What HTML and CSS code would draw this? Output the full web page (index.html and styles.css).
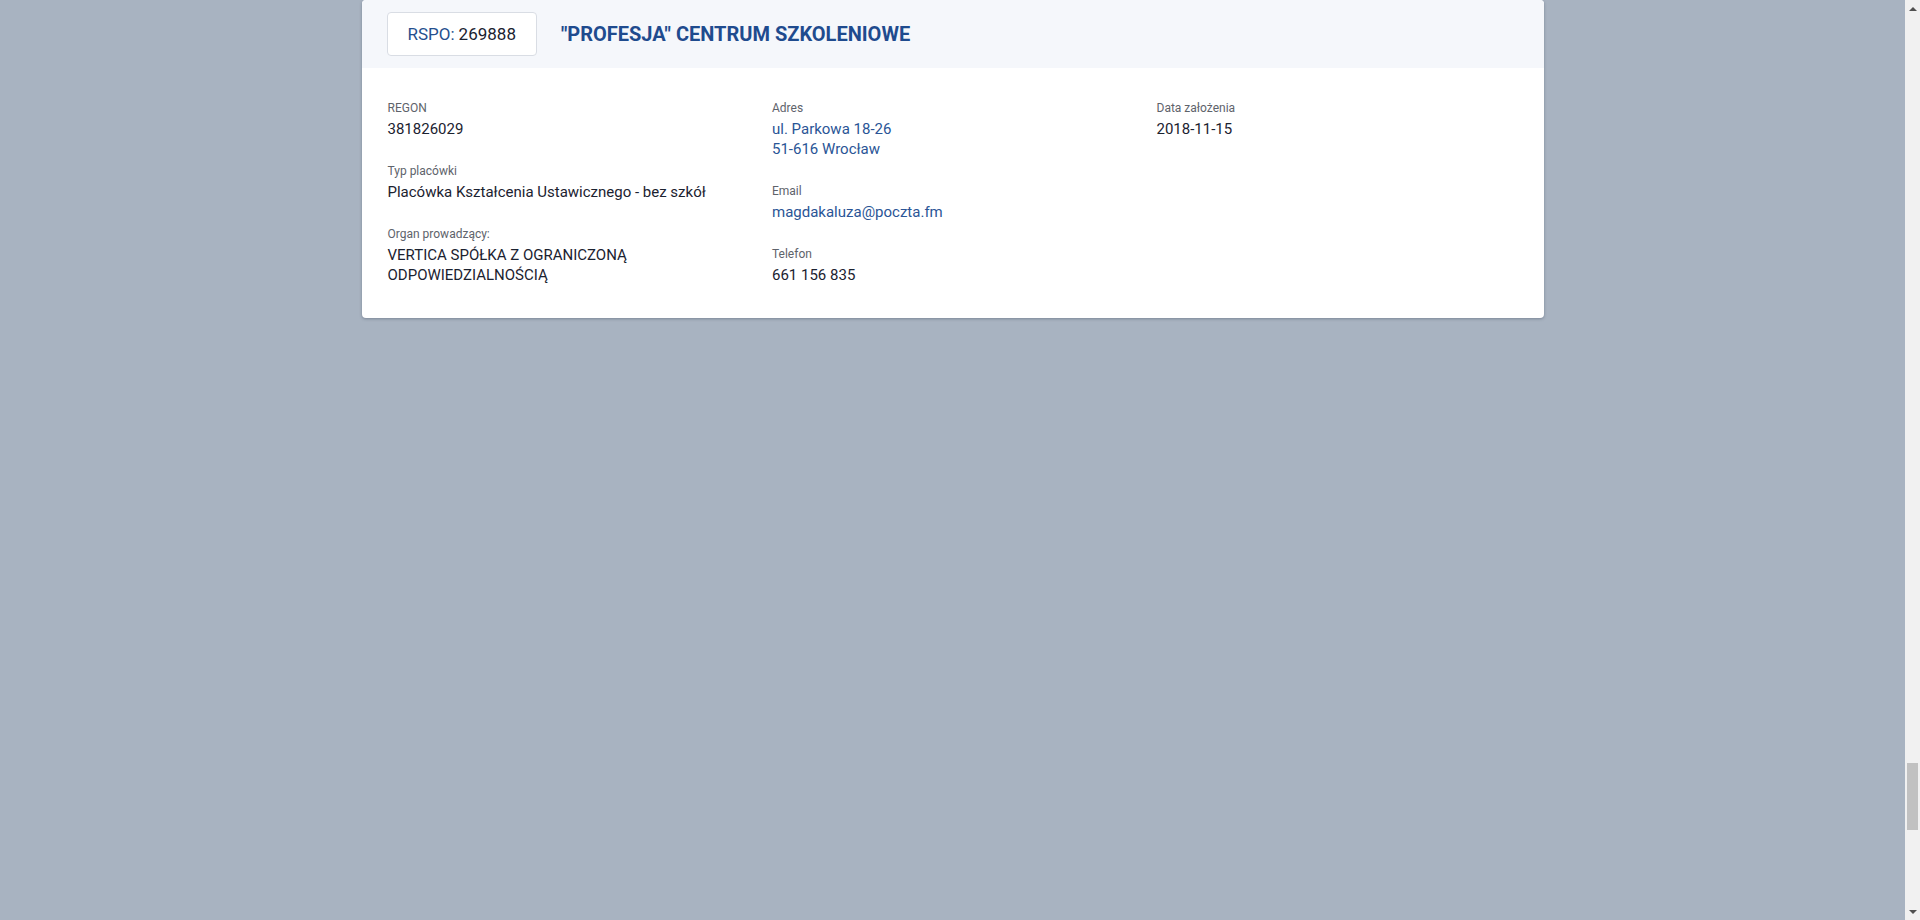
FILE: index.html
```html
<!DOCTYPE html>
<html lang="pl">
<head>
<meta charset="utf-8">
<title>Placówka</title>
<link rel="stylesheet" href="styles.css">
</head>
<body>
<div class="viewport">
  <main class="page">
    <article class="card">
      <header class="card-head">
        <div class="rspo"><span class="rspo-label">RSPO:</span> 269888</div>
        <h1 class="title">"PROFESJA" CENTRUM SZKOLENIOWE</h1>
      </header>
      <section class="card-body">
        <div class="col">
          <div class="field">
            <div class="label">REGON</div>
            <div class="value">381826029</div>
          </div>
          <div class="field">
            <div class="label">Typ placówki</div>
            <div class="value">Placówka Kształcenia Ustawicznego - bez szkół</div>
          </div>
          <div class="field">
            <div class="label">Organ prowadzący:</div>
            <div class="value">VERTICA SPÓŁKA Z OGRANICZONĄ ODPOWIEDZIALNOŚCIĄ</div>
          </div>
        </div>
        <div class="col">
          <div class="field">
            <div class="label">Adres</div>
            <div class="value link">ul. Parkowa 18-26<br>51-616 Wrocław</div>
          </div>
          <div class="field">
            <div class="label">Email</div>
            <div class="value link">magdakaluza@poczta.fm</div>
          </div>
          <div class="field">
            <div class="label">Telefon</div>
            <div class="value">661 156 835</div>
          </div>
        </div>
        <div class="col">
          <div class="field">
            <div class="label">Data założenia</div>
            <div class="value">2018-11-15</div>
          </div>
        </div>
      </section>
    </article>
  </main>
  <div class="scrollbar" aria-hidden="true">
    <div class="sb-btn"><span class="arrow-up"></span></div>
    <div class="sb-track"><div class="sb-thumb"></div></div>
    <div class="sb-btn"><span class="arrow-down"></span></div>
  </div>
</div>
</body>
</html>
```

FILE: styles.css
```css
* { box-sizing: border-box; }

html, body {
  margin: 0;
  padding: 0;
  height: 920px;
  overflow: hidden;
}

body {
  background: #a8b3c1;
  font-family: Roboto, "Liberation Sans", Arial, sans-serif;
  color: #1b2230;
}

.viewport {
  display: flex;
  height: 920px;
}

.page {
  flex: 1;
  display: flex;
  justify-content: center;
  align-items: flex-start;
}

.card {
  width: 1182px;
  background: #ffffff;
  border-radius: 4px;
  box-shadow: 0 1px 3px rgba(40, 50, 70, 0.35);
  overflow: hidden;
}

.card-head {
  display: flex;
  align-items: center;
  gap: 24px;
  padding: 12px 25px 12px;
  background: #f5f7fb;
}

.rspo {
  height: 44px;
  display: flex;
  align-items: center;
  gap: 4px;
  padding: 0 20px;
  border: 1px solid #d9dde4;
  border-radius: 4px;
  background: #ffffff;
  font-size: 17px;
  color: #1b2230;
}

.rspo-label { color: #254f8e; }

.title {
  margin: 0;
  font-size: 20px;
  font-weight: 700;
  color: #1f4b8e;
}

.card-body {
  display: grid;
  grid-template-columns: repeat(3, 1fr);
  column-gap: 23.5px;
  padding: 32px 26px 33px;
}

.col {
  display: flex;
  flex-direction: column;
  gap: 24px;
}

.label {
  font-size: 12px;
  line-height: 16px;
  color: #5e636b;
  margin-bottom: 3px;
}

.value {
  font-size: 15px;
  line-height: 20px;
  color: #1b2230;
}

.value.link { color: #2a5596; }

.scrollbar {
  width: 15px;
  flex: none;
  background: #f1f1f1;
  display: flex;
  flex-direction: column;
}

.sb-btn {
  height: 17px;
  display: flex;
  align-items: center;
  justify-content: center;
}

.arrow-up {
  width: 0;
  height: 0;
  border-left: 4px solid transparent;
  border-right: 4px solid transparent;
  border-bottom: 4px solid #505050;
}

.arrow-down {
  width: 0;
  height: 0;
  border-left: 4px solid transparent;
  border-right: 4px solid transparent;
  border-top: 4px solid #505050;
}

.sb-track {
  flex: 1;
  display: flex;
  flex-direction: column;
}

.sb-thumb {
  margin: 746px 2px 0;
  height: 67px;
  background: #c1c1c1;
}
```
